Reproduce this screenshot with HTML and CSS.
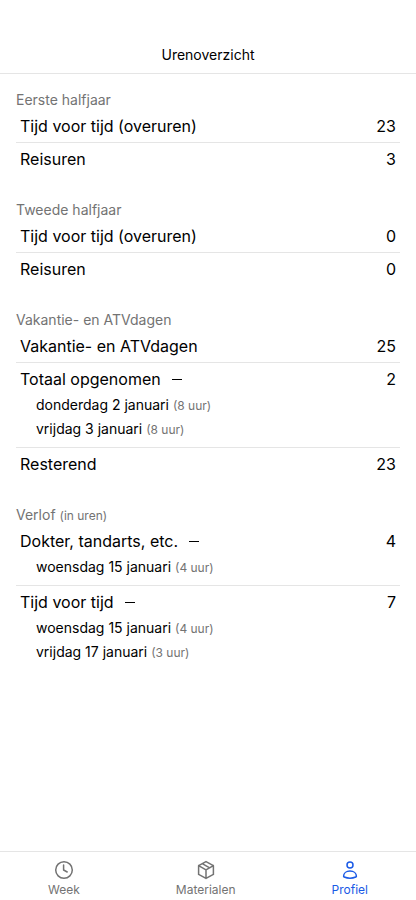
FILE: index.html
```html
<!DOCTYPE html>
<html lang="nl">
<head>
<meta charset="utf-8">
<meta name="viewport" content="width=device-width, initial-scale=1">
<title>Urenoverzicht</title>
<link rel="stylesheet" href="styles.css">
</head>
<body>
<header class="header"><h1>Urenoverzicht</h1></header>
<main class="content">
  <section>
    <h2>Eerste halfjaar</h2>
    <ul class="rows">
      <li><div class="row"><span>Tijd voor tijd (overuren)</span><span>23</span></div></li>
      <li><div class="row"><span>Reisuren</span><span>3</span></div></li>
    </ul>
  </section>
  <section>
    <h2>Tweede halfjaar</h2>
    <ul class="rows">
      <li><div class="row"><span>Tijd voor tijd (overuren)</span><span>0</span></div></li>
      <li><div class="row"><span>Reisuren</span><span>0</span></div></li>
    </ul>
  </section>
  <section>
    <h2>Vakantie- en ATVdagen</h2>
    <ul class="rows">
      <li><div class="row"><span>Vakantie- en ATVdagen</span><span>25</span></div></li>
      <li>
        <button class="row expanded" type="button" aria-expanded="true"><span class="label">Totaal opgenomen <svg class="minus" viewBox="0 0 12 12" aria-hidden="true"><path d="M1 6.5h10"/></svg></span><span>2</span></button>
        <ul class="days">
          <li>donderdag 2 januari <small>(8 uur)</small></li>
          <li>vrijdag 3 januari <small>(8 uur)</small></li>
        </ul>
      </li>
      <li><div class="row"><span>Resterend</span><span>23</span></div></li>
    </ul>
  </section>
  <section>
    <h2>Verlof <small>(in uren)</small></h2>
    <ul class="rows">
      <li>
        <button class="row expanded" type="button" aria-expanded="true"><span class="label">Dokter, tandarts, etc. <svg class="minus" viewBox="0 0 12 12" aria-hidden="true"><path d="M1 6.5h10"/></svg></span><span>4</span></button>
        <ul class="days">
          <li>woensdag 15 januari <small>(4 uur)</small></li>
        </ul>
      </li>
      <li>
        <button class="row expanded" type="button" aria-expanded="true"><span class="label">Tijd voor tijd <svg class="minus" viewBox="0 0 12 12" aria-hidden="true"><path d="M1 6.5h10"/></svg></span><span>7</span></button>
        <ul class="days">
          <li>woensdag 15 januari <small>(4 uur)</small></li>
          <li>vrijdag 17 januari <small>(3 uur)</small></li>
        </ul>
      </li>
    </ul>
  </section>
</main>
<nav class="tabs">
  <a href="#week"><svg viewBox="0 0 20 20" aria-hidden="true"><circle cx="10" cy="10" r="8.3"/><path d="M9.6 5v5l3.6 2"/></svg>Week</a>
  <a href="#materialen"><svg viewBox="0 0 20 20" aria-hidden="true"><path d="M10 1.6 17.4 5.6v8.8L10 18.4l-7.4-4V5.6zM2.6 5.6 10 9.8l7.4-4.2M10 9.8v8.6M6.2 3.7l7.5 4.1"/></svg>Materialen</a>
  <a class="active" href="#profiel" aria-current="page"><svg viewBox="0 0 20 20" aria-hidden="true"><circle cx="10" cy="4.9" r="3"/><path d="M3.6 16.3c0-3.1 2.7-5.2 6.4-5.2s6.4 2.1 6.4 5.2c0 .4-.2.6-.6.7-3.4 1.4-8.2 1.4-11.6 0-.4-.1-.6-.3-.6-.7z"/></svg>Profiel</a>
</nav>
</body>
</html>
```
FILE: styles.css
```css
* { box-sizing: border-box; }
body {
  margin: 0;
  min-height: 100vh;
  display: flex;
  flex-direction: column;
  background: #fff;
  color: #000;
  font-family: Inter, "Liberation Sans", sans-serif;
  font-size: 16px;
  line-height: 24px;
}
h1, h2, ul { margin: 0; padding: 0; font-weight: 400; }
ul { list-style: none; }
.header {
  padding: 45px 16px 8px;
  border-bottom: 1px solid #e5e5e5;
  text-align: center;
}
h1 { font-size: 14px; line-height: 20px; }
.content {
  flex: 1;
  display: flex;
  flex-direction: column;
  gap: 25px;
  padding: 16px;
}
h2 { color: #737373; font-size: 14px; line-height: 20px; }
small { color: #737373; font-size: 12px; line-height: 1; }
.rows > li + li { border-top: 1px solid #e5e5e5; }
.row {
  width: 100%;
  display: flex;
  justify-content: space-between;
  padding: 4px;
  border: 0;
  background: none;
  color: inherit;
  font: inherit;
  text-align: left;
}
.expanded { padding-bottom: 2px; }
.label { display: flex; align-items: center; gap: 10px; }
.minus { width: 12px; height: 12px; stroke: currentColor; stroke-width: 1; }
.days { padding: 0 20px 6px; font-size: 14px; }
.tabs {
  display: flex;
  justify-content: space-around;
  padding: 8px 0 0;
  border-top: 1px solid #e5e5e5;
}
.tabs a {
  display: flex;
  flex-direction: column;
  align-items: center;
  color: #737373;
  font-size: 12px;
  line-height: 20px;
  text-decoration: none;
}
.tabs svg { width: 20px; height: 20px; fill: none; stroke: currentColor; stroke-width: 1.5; stroke-linejoin: round; stroke-linecap: round; }
.tabs .active { color: #1a5ae6; }
```
